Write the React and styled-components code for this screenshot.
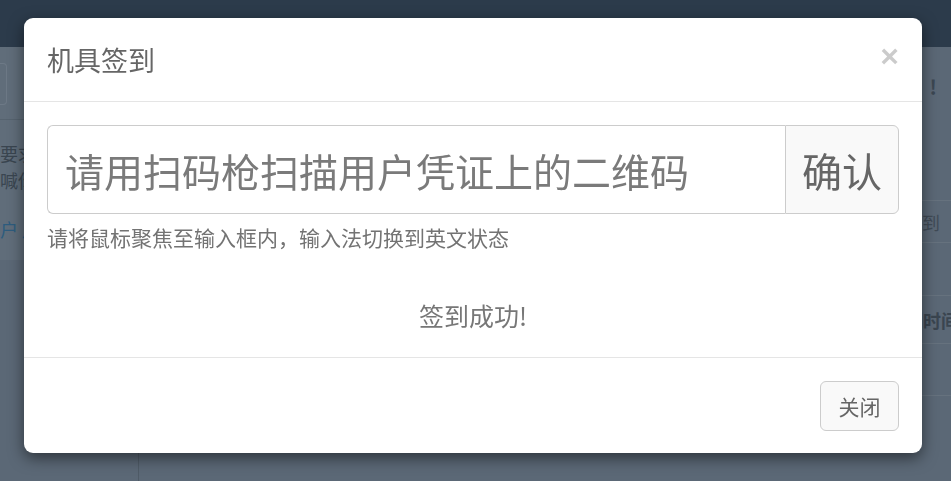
import React from 'react';
import styled, { createGlobalStyle } from 'styled-components';

const GlobalStyle = createGlobalStyle`
  html, body {
    margin: 0;
    padding: 0;
    height: 100%;
    overflow: hidden;
  }
  body {
    font-family: "Noto Sans CJK SC", "Noto Sans", "Liberation Sans", sans-serif;
    background: #5b6876;
  }
  * {
    box-sizing: border-box;
  }
`;

/* ---- page behind the modal (already dimmed colours) ---- */

const Page = styled.div`
  width: 951px;
  height: 481px;
  display: grid;
  grid-template-rows: 47px 1fr;
  background: #5b6876;
  overflow: hidden;
`;

const TopBar = styled.div`
  background: #2c3b4b;
`;

const Main = styled.div`
  display: flex;
  min-height: 0;
`;

const Sidebar = styled.div`
  width: 139px;
  border-right: 1px solid #4f5b67;
  display: flex;
  flex-direction: column;
  overflow: hidden;
`;

const SidePanel = styled.div`
  background: #606d7a;
  height: 213px;
`;

const SideSearch = styled.div`
  height: 73px;
  padding: 16px 0;
  border-bottom: 1px solid #56636f;
`;

const SearchBox = styled.div`
  width: 7px;
  height: 42px;
  border: 1px solid #6d7986;
  border-left: none;
  border-radius: 0 4px 4px 0;
`;

const SideText = styled.div`
  padding: 20px 0 0 0;
  font-size: 18px;
  line-height: 27px;
  color: #3a4550;
  white-space: nowrap;
`;

const SideLink = styled.div`
  margin-top: 22px;
  font-size: 18px;
  color: #2d5c7e;
  white-space: nowrap;
`;

const Content = styled.div`
  flex: 1;
  display: flex;
  flex-direction: column;
  overflow: hidden;
`;

const Notice = styled.div`
  height: 153px;
  display: flex;
  justify-content: flex-end;
  gap: 10px;
  padding: 25px 14px 0 0;
  font-size: 20px;
  font-weight: 700;
  color: #3c4753;
`;

const Row = styled.div`
  height: ${p => p.$h}px;
  border-top: 1px solid #66727e;
  display: flex;
  align-items: center;
  justify-content: flex-end;
  padding-right: ${p => p.$pr || 0}px;
  margin-right: ${p => p.$mr || 0}px;
  font-size: 18px;
  font-weight: ${p => (p.$bold ? 700 : 400)};
  color: ${p => (p.$bold ? '#3a4550' : '#404b56')};
  white-space: nowrap;
`;

/* ---- modal ---- */

const Backdrop = styled.div`
  position: fixed;
  inset: 0;
  display: flex;
  justify-content: center;
  align-items: flex-start;
  padding-top: 18px;
`;

const Dialog = styled.div`
  width: 898px;
  margin-left: -5px;
  background: #fff;
  border-radius: 9px;
  box-shadow: 0 5px 15px rgba(0, 0, 0, 0.5);
  overflow: hidden;
`;

const Header = styled.div`
  display: flex;
  align-items: center;
  justify-content: space-between;
  padding: 23px 23px 22px 23px;
  border-bottom: 1px solid #e5e5e5;
`;

const Title = styled.h4`
  margin: 0;
  font-size: 27px;
  font-weight: 400;
  line-height: 38px;
  color: #666;
`;

const CloseX = styled.button`
  background: none;
  border: none;
  padding: 0;
  margin-top: -8px;
  font-family: "Liberation Sans", sans-serif;
  font-size: 32px;
  font-weight: 700;
  line-height: 1;
  color: #000;
  opacity: 0.2;
  cursor: pointer;
`;

const Body = styled.div`
  padding: 23px 23px 24px 23px;
`;

const InputGroup = styled.div`
  display: flex;
  height: 89px;
`;

const ScanInput = styled.input`
  flex: 1;
  min-width: 0;
  height: 100%;
  padding: 0 17px;
  border: 1px solid #ccc;
  border-right: none;
  border-radius: 6px 0 0 6px;
  font-family: inherit;
  font-size: 39px;
  color: #555;
  outline: none;

  &::placeholder {
    color: #7a7a7a;
  }
`;

const ConfirmButton = styled.button`
  width: 114px;
  border: 1px solid #ccc;
  border-radius: 0 6px 6px 0;
  background: #f9f9f9;
  font-family: inherit;
  font-size: 40px;
  color: #666;
  padding: 0;
  cursor: pointer;
`;

const HelpText = styled.p`
  margin: 8px 0 0 0;
  font-size: 21px;
  line-height: 30px;
  color: #737373;
`;

const Result = styled.div`
  margin-top: 45px;
  text-align: center;
  font-size: 25px;
  line-height: 36px;
  color: #777;
`;

const Footer = styled.div`
  display: flex;
  justify-content: flex-end;
  padding: 23px 23px 22px 23px;
  border-top: 1px solid #e5e5e5;
`;

const FooterButton = styled.button`
  width: 79px;
  height: 50px;
  border: 1px solid #ccc;
  border-radius: 6px;
  background: #f9f9f9;
  font-family: inherit;
  font-size: 21px;
  color: #666;
  padding: 0;
  cursor: pointer;
`;

export default function App() {
  return (
    <>
      <GlobalStyle />
      <Page>
        <TopBar />
        <Main>
          <Sidebar>
            <SidePanel>
              <SideSearch>
                <SearchBox />
              </SideSearch>
              <SideText>
                要求签到
                <br />
                喊你签到
              </SideText>
              <SideLink>户 用户</SideLink>
            </SidePanel>
          </Sidebar>
          <Content>
            <Notice>
              <span>欢迎使用</span>
              <span>!</span>
            </Notice>
            <Row $h={42} $pr={11}>签到</Row>
            <Row $h={53} />
            <Row $h={48} $bold $mr={-8}>签到时间</Row>
            <Row $h={52} />
            <Row $h={40} />
          </Content>
        </Main>
      </Page>
      <Backdrop>
        <Dialog>
          <Header>
            <Title>机具签到</Title>
            <CloseX aria-label="关闭">×</CloseX>
          </Header>
          <Body>
            <InputGroup>
              <ScanInput placeholder="请用扫码枪扫描用户凭证上的二维码" />
              <ConfirmButton>确认</ConfirmButton>
            </InputGroup>
            <HelpText>请将鼠标聚焦至输入框内，输入法切换到英文状态</HelpText>
            <Result>签到成功!</Result>
          </Body>
          <Footer>
            <FooterButton>关闭</FooterButton>
          </Footer>
        </Dialog>
      </Backdrop>
    </>
  );
}
